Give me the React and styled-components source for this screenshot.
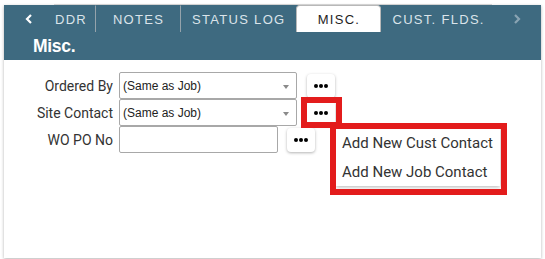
import React from "react";
import styled, { createGlobalStyle } from "styled-components";

const GlobalStyle = createGlobalStyle`
  html, body {
    margin: 0;
    padding: 0;
    background: #ffffff;
  }
  body {
    font-family: Roboto, "Liberation Sans", Arial, sans-serif;
  }
`;

const Page = styled.div`
  width: 545px;
  height: 259px;
  box-sizing: border-box;
  padding: 5px 4px 1px 4px;
`;

const Card = styled.div`
  position: relative;
  height: 253px;
  background: #ffffff;
  box-shadow: 0 1px 3px rgba(0, 0, 0, 0.3);
`;

const Header = styled.div`
  background: #3e6a80;
  height: 55px;
  display: flex;
  flex-direction: column;
`;

const TabBar = styled.div`
  display: flex;
  height: 27px;
`;

const Arrow = styled.div`
  width: ${(p) => p.$w}px;
  flex: none;
  display: flex;
  align-items: center;
  justify-content: center;
  color: ${(p) => (p.$disabled ? "#8aa4b3" : "#ffffff")};
`;

const Viewport = styled.div`
  flex: 1;
  overflow: hidden;
  margin-top: -1px;
  border-top: 1px solid #d2d2d2;
`;

const Track = styled.div`
  display: flex;
  height: 27px;
  margin-left: -22px;
`;

const Tab = styled.div`
  flex: none;
  box-sizing: border-box;
  min-width: 85px;
  padding: 0 10px;
  height: 27px;
  display: flex;
  align-items: center;
  justify-content: center;
  font-family: "Liberation Sans", Arial, sans-serif;
  font-size: 13px;
  letter-spacing: 1.3px;
  text-transform: uppercase;
  white-space: nowrap;
  color: ${(p) => (p.$active ? "#1e1e1e" : "#dbe4ea")};
  background: ${(p) => (p.$active ? "#ffffff" : "transparent")};
  border: 1px solid ${(p) => (p.$active ? "#b8b8b8" : "transparent")};
  border-bottom: none;
  border-right-color: ${(p) =>
    p.$active ? "#b8b8b8" : p.$sep ? "#95a3ab" : "transparent"};
  border-radius: ${(p) => (p.$active ? "4px 4px 0 0" : "0")};
  ${(p) => (p.$narrow ? "min-width: 0; padding: 0 8px 0 12px;" : "")}
`;

const Title = styled.div`
  flex: 1;
  display: flex;
  align-items: center;
  padding-left: 29px;
  font-family: "Liberation Sans", Arial, sans-serif;
  font-weight: bold;
  font-size: 17.5px;
  color: #ffffff;
  letter-spacing: -0.3px;
`;

const Form = styled.div`
  display: grid;
  grid-template-columns: 109px auto;
  column-gap: 6px;
  padding-top: 12px;
  align-items: center;
`;

const Label = styled.div`
  text-align: right;
  font-size: 14px;
  color: #333333;
  white-space: nowrap;
`;

const Field = styled.div`
  display: flex;
  align-items: center;
  gap: ${(p) => p.$gap}px;
  height: 27px;
`;

const Select = styled.div`
  position: relative;
  box-sizing: border-box;
  width: 178px;
  height: 27px;
  border: 1px solid #a8a8a8;
  border-radius: 2px;
  display: flex;
  align-items: center;
  padding-left: 3px;
  font-family: "Liberation Sans", Arial, sans-serif;
  font-size: 12px;
  color: #222222;

  &::after {
    content: "";
    position: absolute;
    right: 7px;
    top: 50%;
    margin-top: -1px;
    border-left: 3.5px solid transparent;
    border-right: 3.5px solid transparent;
    border-top: 4px solid #8a8a8a;
  }
`;

const Input = styled.div`
  box-sizing: border-box;
  width: 159px;
  height: 27px;
  border: 1px solid #a8a8a8;
  border-radius: 2px;
`;

const DotsButton = styled.div`
  box-sizing: border-box;
  width: 28px;
  height: 24px;
  border-radius: 4px;
  background: #ffffff;
  box-shadow: 0 1px 3px rgba(0, 0, 0, 0.3);
  display: flex;
  align-items: center;
  justify-content: center;
`;

const Menu = styled.div`
  position: absolute;
  left: 332px;
  top: 122px;
  width: 164px;
  padding-top: 1px;
  background: #ffffff;
  box-shadow: 0 1px 4px rgba(0, 0, 0, 0.3);
`;

const MenuItem = styled.div`
  height: 29px;
  display: flex;
  align-items: center;
  padding-left: 6px;
  font-size: 15px;
  color: #333333;
  white-space: nowrap;
`;

const Highlight = styled.div`
  position: absolute;
  box-sizing: border-box;
  border: 6px solid #e31c1c;
  left: ${(p) => p.$x}px;
  top: ${(p) => p.$y}px;
  width: ${(p) => p.$w}px;
  height: ${(p) => p.$h}px;
`;

const Dots = () => (
  <svg width="14" height="4" viewBox="0 0 14 4">
    <circle cx="2" cy="2" r="2" fill="#000" />
    <circle cx="7" cy="2" r="2" fill="#000" />
    <circle cx="12" cy="2" r="2" fill="#000" />
  </svg>
);

const Chevron = ({ dir }) => (
  <svg width="8" height="10" viewBox="0 0 8 10">
    <polyline
      points={dir === "left" ? "6,1 2,5 6,9" : "2,1 6,5 2,9"}
      fill="none"
      stroke="currentColor"
      strokeWidth="2.2"
    />
  </svg>
);

const tabs = [
  { label: "Addr", sep: true, narrow: true },
  { label: "Notes", sep: true },
  { label: "Status Log", sep: false },
  { label: "Misc.", active: true },
  { label: "Cust. Flds.", sep: true },
];

export default function App() {
  return (
    <Page>
      <GlobalStyle />
      <Card>
        <Header>
          <TabBar>
            <Arrow $w={50}>
              <Chevron dir="left" />
            </Arrow>
            <Viewport>
              <Track>
                {tabs.map((t) => (
                  <Tab key={t.label} $active={t.active} $sep={t.sep} $narrow={t.narrow}>
                    {t.label}
                  </Tab>
                ))}
              </Track>
            </Viewport>
            <Arrow $w={49} $disabled>
              <Chevron dir="right" />
            </Arrow>
          </TabBar>
          <Title>Misc.</Title>
        </Header>

        <Form>
          <Label>Ordered By</Label>
          <Field $gap={10}>
            <Select>(Same as Job)</Select>
            <DotsButton>
              <Dots />
            </DotsButton>
          </Field>

          <Label>Site Contact</Label>
          <Field $gap={10}>
            <Select>(Same as Job)</Select>
            <DotsButton>
              <Dots />
            </DotsButton>
          </Field>

          <Label>WO PO No</Label>
          <Field $gap={9}>
            <Input />
            <DotsButton>
              <Dots />
            </DotsButton>
          </Field>
        </Form>

        <Menu>
          <MenuItem>Add New Cust Contact</MenuItem>
          <MenuItem>Add New Job Contact</MenuItem>
        </Menu>
        <Highlight $x={297} $y={92} $w={41} $h={31} />
        <Highlight $x={326} $y={118} $w={177} $h={72} />
      </Card>
    </Page>
  );
}
